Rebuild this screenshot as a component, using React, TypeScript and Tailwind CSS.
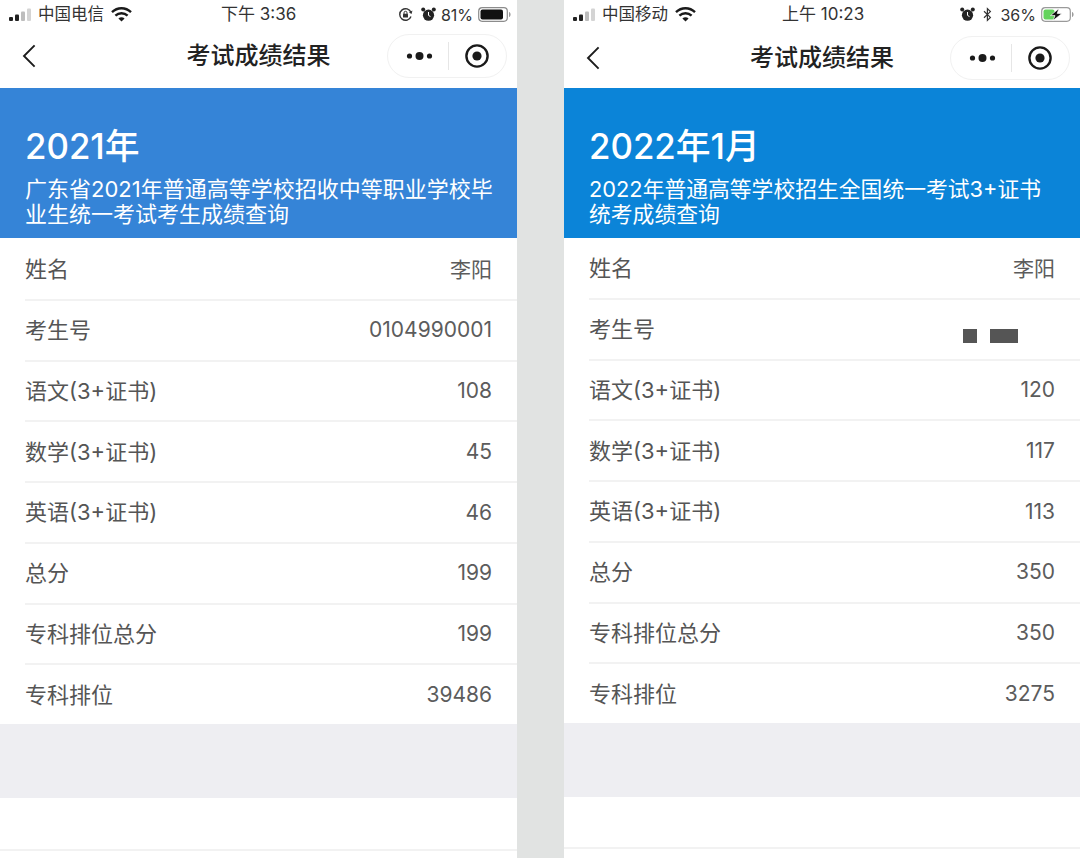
import React from "react";

const FONT = '"Inter", "Noto Sans CJK SC", sans-serif';

function Signal() {
  return (
    <svg width="24" height="14" viewBox="0 0 24 14" className="block">
      <rect x="0" y="9" width="4" height="4" rx="1" fill="#222" />
      <rect x="6" y="6.5" width="4" height="6.5" rx="1" fill="#222" />
      <rect x="12" y="3.5" width="4" height="9.5" rx="1" fill="#bdbdbd" />
      <rect x="18" y="0.5" width="4" height="12.5" rx="1" fill="#d4d4d4" />
    </svg>
  );
}

function Wifi() {
  return (
    <svg width="21" height="15" viewBox="0 0 21 15" className="block">
      <path d="M1 5.2C6.4 0 14.6 0 20 5.2" fill="none" stroke="#1a1a1a" strokeWidth="2.4" />
      <path d="M4.4 8.6C7.9 5.4 13.1 5.4 16.6 8.6" fill="none" stroke="#1a1a1a" strokeWidth="2.4" />
      <path d="M7.4 11.4L10.5 14.6L13.6 11.4C11.8 9.8 9.2 9.8 7.4 11.4Z" fill="#1a1a1a" />
    </svg>
  );
}

function Alarm() {
  return (
    <svg width="15" height="15" viewBox="0 0 15 15" className="block">
      <circle cx="7.5" cy="8.2" r="5.6" fill="#222" />
      <path d="M7.5 5v3.4l2 1.2" stroke="#fff" strokeWidth="1" fill="none" />
      <circle cx="2.2" cy="2.6" r="2" fill="#222" />
      <circle cx="12.8" cy="2.6" r="2" fill="#222" />
    </svg>
  );
}

function RotationLock() {
  return (
    <svg width="15" height="15" viewBox="0 0 15 15" className="block">
      <path d="M13 9.5A5.8 5.8 0 1 1 13 5.5" fill="none" stroke="#333" strokeWidth="1.4" />
      <path d="M14.4 3.6L13.6 7L11 5.4Z" fill="#333" />
      <rect x="5" y="6.8" width="5" height="3.8" rx="0.6" fill="#333" />
      <path d="M6 7V5.8a1.5 1.5 0 0 1 3 0V7" fill="none" stroke="#333" strokeWidth="1" />
    </svg>
  );
}

function Bluetooth() {
  return (
    <svg width="11" height="15" viewBox="0 0 11 15" className="block">
      <path d="M2 4.2L8.4 10.4L5.4 13.4V1.6L8.4 4.6L2 10.8" fill="none" stroke="#333" strokeWidth="1.2" />
    </svg>
  );
}

function BatteryFull() {
  return (
    <svg width="33" height="15" viewBox="0 0 33 15" className="block">
      <rect x="0.7" y="0.7" width="28.6" height="13.6" rx="3.5" fill="none" stroke="#8c8c8c" strokeWidth="1.2" />
      <rect x="2.5" y="2.5" width="22.5" height="10" rx="2" fill="#111" />
      <path d="M31 5v5c1-.3 1.6-1.3 1.6-2.5S32 5.3 31 5Z" fill="#9a9a9a" />
    </svg>
  );
}

function BatteryCharging() {
  return (
    <svg width="33" height="15" viewBox="0 0 33 15" className="block">
      <rect x="0.7" y="0.7" width="28.6" height="13.6" rx="3.5" fill="none" stroke="#9a9a9a" strokeWidth="1.2" />
      <rect x="2.5" y="2.5" width="11" height="10" rx="2" fill="#63d35c" />
      <path d="M18 1.5L9.5 8.6H14L12 13.6L21 6.4H16.2Z" fill="#111" stroke="#fff" strokeWidth="0.7" />
      <path d="M31 5v5c1-.3 1.6-1.3 1.6-2.5S32 5.3 31 5Z" fill="#9a9a9a" />
    </svg>
  );
}

function Back() {
  return (
    <svg width="14" height="24" viewBox="0 0 14 24" className="block">
      <path d="M12.6 1.4L2 12L12.6 22.6" fill="none" stroke="#1c1c1c" strokeWidth="1.9" />
    </svg>
  );
}

function Capsule() {
  return (
    <div className="flex h-[44px] w-[120px] items-center justify-self-end rounded-full border border-[#f1f1f1] bg-white">
      <div className="flex w-[60px] justify-center">
        <svg width="28" height="10" viewBox="0 0 28 10" className="ml-[4px] block">
          <circle cx="3.5" cy="5" r="2.6" fill="#1a1a1a" />
          <circle cx="13.5" cy="5" r="4" fill="#1a1a1a" />
          <circle cx="23.5" cy="5" r="2.6" fill="#1a1a1a" />
        </svg>
      </div>
      <div className="h-[28px] w-px bg-[#e6e6e6]" />
      <div className="flex flex-1 justify-center">
        <svg width="26" height="26" viewBox="0 0 26 26" className="-ml-[1px] block">
          <circle cx="13" cy="13" r="10.6" fill="none" stroke="#1a1a1a" strokeWidth="2.4" />
          <circle cx="13" cy="13" r="4.6" fill="#1a1a1a" />
        </svg>
      </div>
    </div>
  );
}

function Row({ label, value, last }: { label: string; value: React.ReactNode; last?: boolean }) {
  return (
    <div className={`flex flex-1 items-center justify-between pr-[25px] ${last ? "" : "border-b-2 border-[#f2f2f2]"}`}>
      <span className="text-[22px] leading-[30px] text-[#555555]">{label}</span>
      <span className="text-[21px] text-[#5c5c5c]">{value}</span>
    </div>
  );
}

type PanelProps = {
  width: string;
  carrier: string;
  time: string;
  right: React.ReactNode;
  blue: string;
  heading: string;
  lines: string[];
  rows: [string, React.ReactNode][];
  navClass: string;
  rowsClass: string;
  bottomClass: string;
  timeClass: string;
  subClass: string;
};

function Panel(p: PanelProps) {
  return (
    <div className={`flex h-[858px] flex-col bg-white ${p.width}`}>
      <div className="flex h-[28px] items-center pl-[9px] pr-[6px] pt-[1px]">
        <Signal />
        <span className="ml-[5px] text-[16.5px] text-[#333333]">{p.carrier}</span>
        <div className="ml-[7px]">
          <Wifi />
        </div>
        <div className={`flex-1 text-[17px] text-[#333333] ${p.timeClass}`}>{p.time}</div>
        <div className="flex items-center gap-[5px]">{p.right}</div>
      </div>
      <div className={`grid h-[60px] grid-cols-[1fr_auto_1fr] items-center px-[10px] ${p.navClass}`}>
        <div className="pl-[12px]">
          <Back />
        </div>
        <div className="text-[24px] font-medium text-[#222222]">考试成绩结果</div>
        <Capsule />
      </div>
      <div className={`flex h-[150px] flex-col justify-end pb-[11px] pl-[25px] text-white ${p.blue}`}>
        <div className="text-[34.8px] font-medium leading-[44px]">{p.heading}</div>
        <div className={`mt-[9px] leading-[25px] ${p.subClass}`}>
          {p.lines.map((l) => (
            <div key={l} className="whitespace-nowrap">
              {l}
            </div>
          ))}
        </div>
      </div>
      <div className={`flex flex-col pl-[25px] ${p.rowsClass}`}>
        {p.rows.map(([label, value], i) => (
          <Row key={label} label={label} value={value} last={i === p.rows.length - 1} />
        ))}
      </div>
      <div className="h-[74px] bg-[#eeeef2]" />
      <div className={`border-b-2 border-[#f2f2f2] ${p.bottomClass}`} />
    </div>
  );
}

const BlurredId = (
  <span className="mr-[37px] mt-[14px] flex items-center gap-[13px]">
    <span className="block h-[14px] w-[14px] bg-[#555555]" />
    <span className="block h-[14px] w-[28px] bg-[#555555]" />
  </span>
);

export default function App() {
  return (
    <div className="flex h-[858px] w-[1080px] overflow-hidden bg-[#e1e3e2]" style={{ fontFamily: FONT }}>
      <Panel
        width="w-[517px]"
        carrier="中国电信"
        time="下午 3:36"
        timeClass="pl-[89px]"
        subClass="text-[22px]"
        right={
          <>
            <RotationLock />
            <div className="ml-[3px]">
              <Alarm />
            </div>
            <span className="text-[16px] text-[#333333]">81%</span>
            <BatteryFull />
          </>
        }
        blue="bg-[#3584d7]"
        heading="2021年"
        lines={["广东省2021年普通高等学校招收中等职业学校毕", "业生统一考试考生成绩查询"]}
        rows={[
          ["姓名", "李阳"],
          ["考生号", "0104990001"],
          ["语文(3+证书)", "108"],
          ["数学(3+证书)", "45"],
          ["英语(3+证书)", "46"],
          ["总分", "199"],
          ["专科排位总分", "199"],
          ["专科排位", "39486"],
        ]}
        navClass="pb-[4px]"
        rowsClass="h-[486px] pt-[2px]"
        bottomClass="h-[53px]"
      />
      <div className="w-[47px]" />
      <Panel
        width="w-[516px]"
        carrier="中国移动"
        time="上午 10:23"
        timeClass="pl-[86px]"
        subClass="text-[21.8px]"
        right={
          <>
            <Alarm />
            <div className="ml-[2px]">
              <Bluetooth />
            </div>
            <span className="ml-[2px] text-[16px] text-[#333333]">36%</span>
            <BatteryCharging />
          </>
        }
        blue="bg-[#0b84d8]"
        heading="2022年1月"
        lines={["2022年普通高等学校招生全国统一考试3+证书", "统考成绩查询"]}
        rows={[
          ["姓名", "李阳"],
          ["考生号", BlurredId],
          ["语文(3+证书)", "120"],
          ["数学(3+证书)", "117"],
          ["英语(3+证书)", "113"],
          ["总分", "350"],
          ["专科排位总分", "350"],
          ["专科排位", "3275"],
        ]}
        navClass=""
        rowsClass="h-[485px] pt-[1px]"
        bottomClass="h-[52px]"
      />
    </div>
  );
}
